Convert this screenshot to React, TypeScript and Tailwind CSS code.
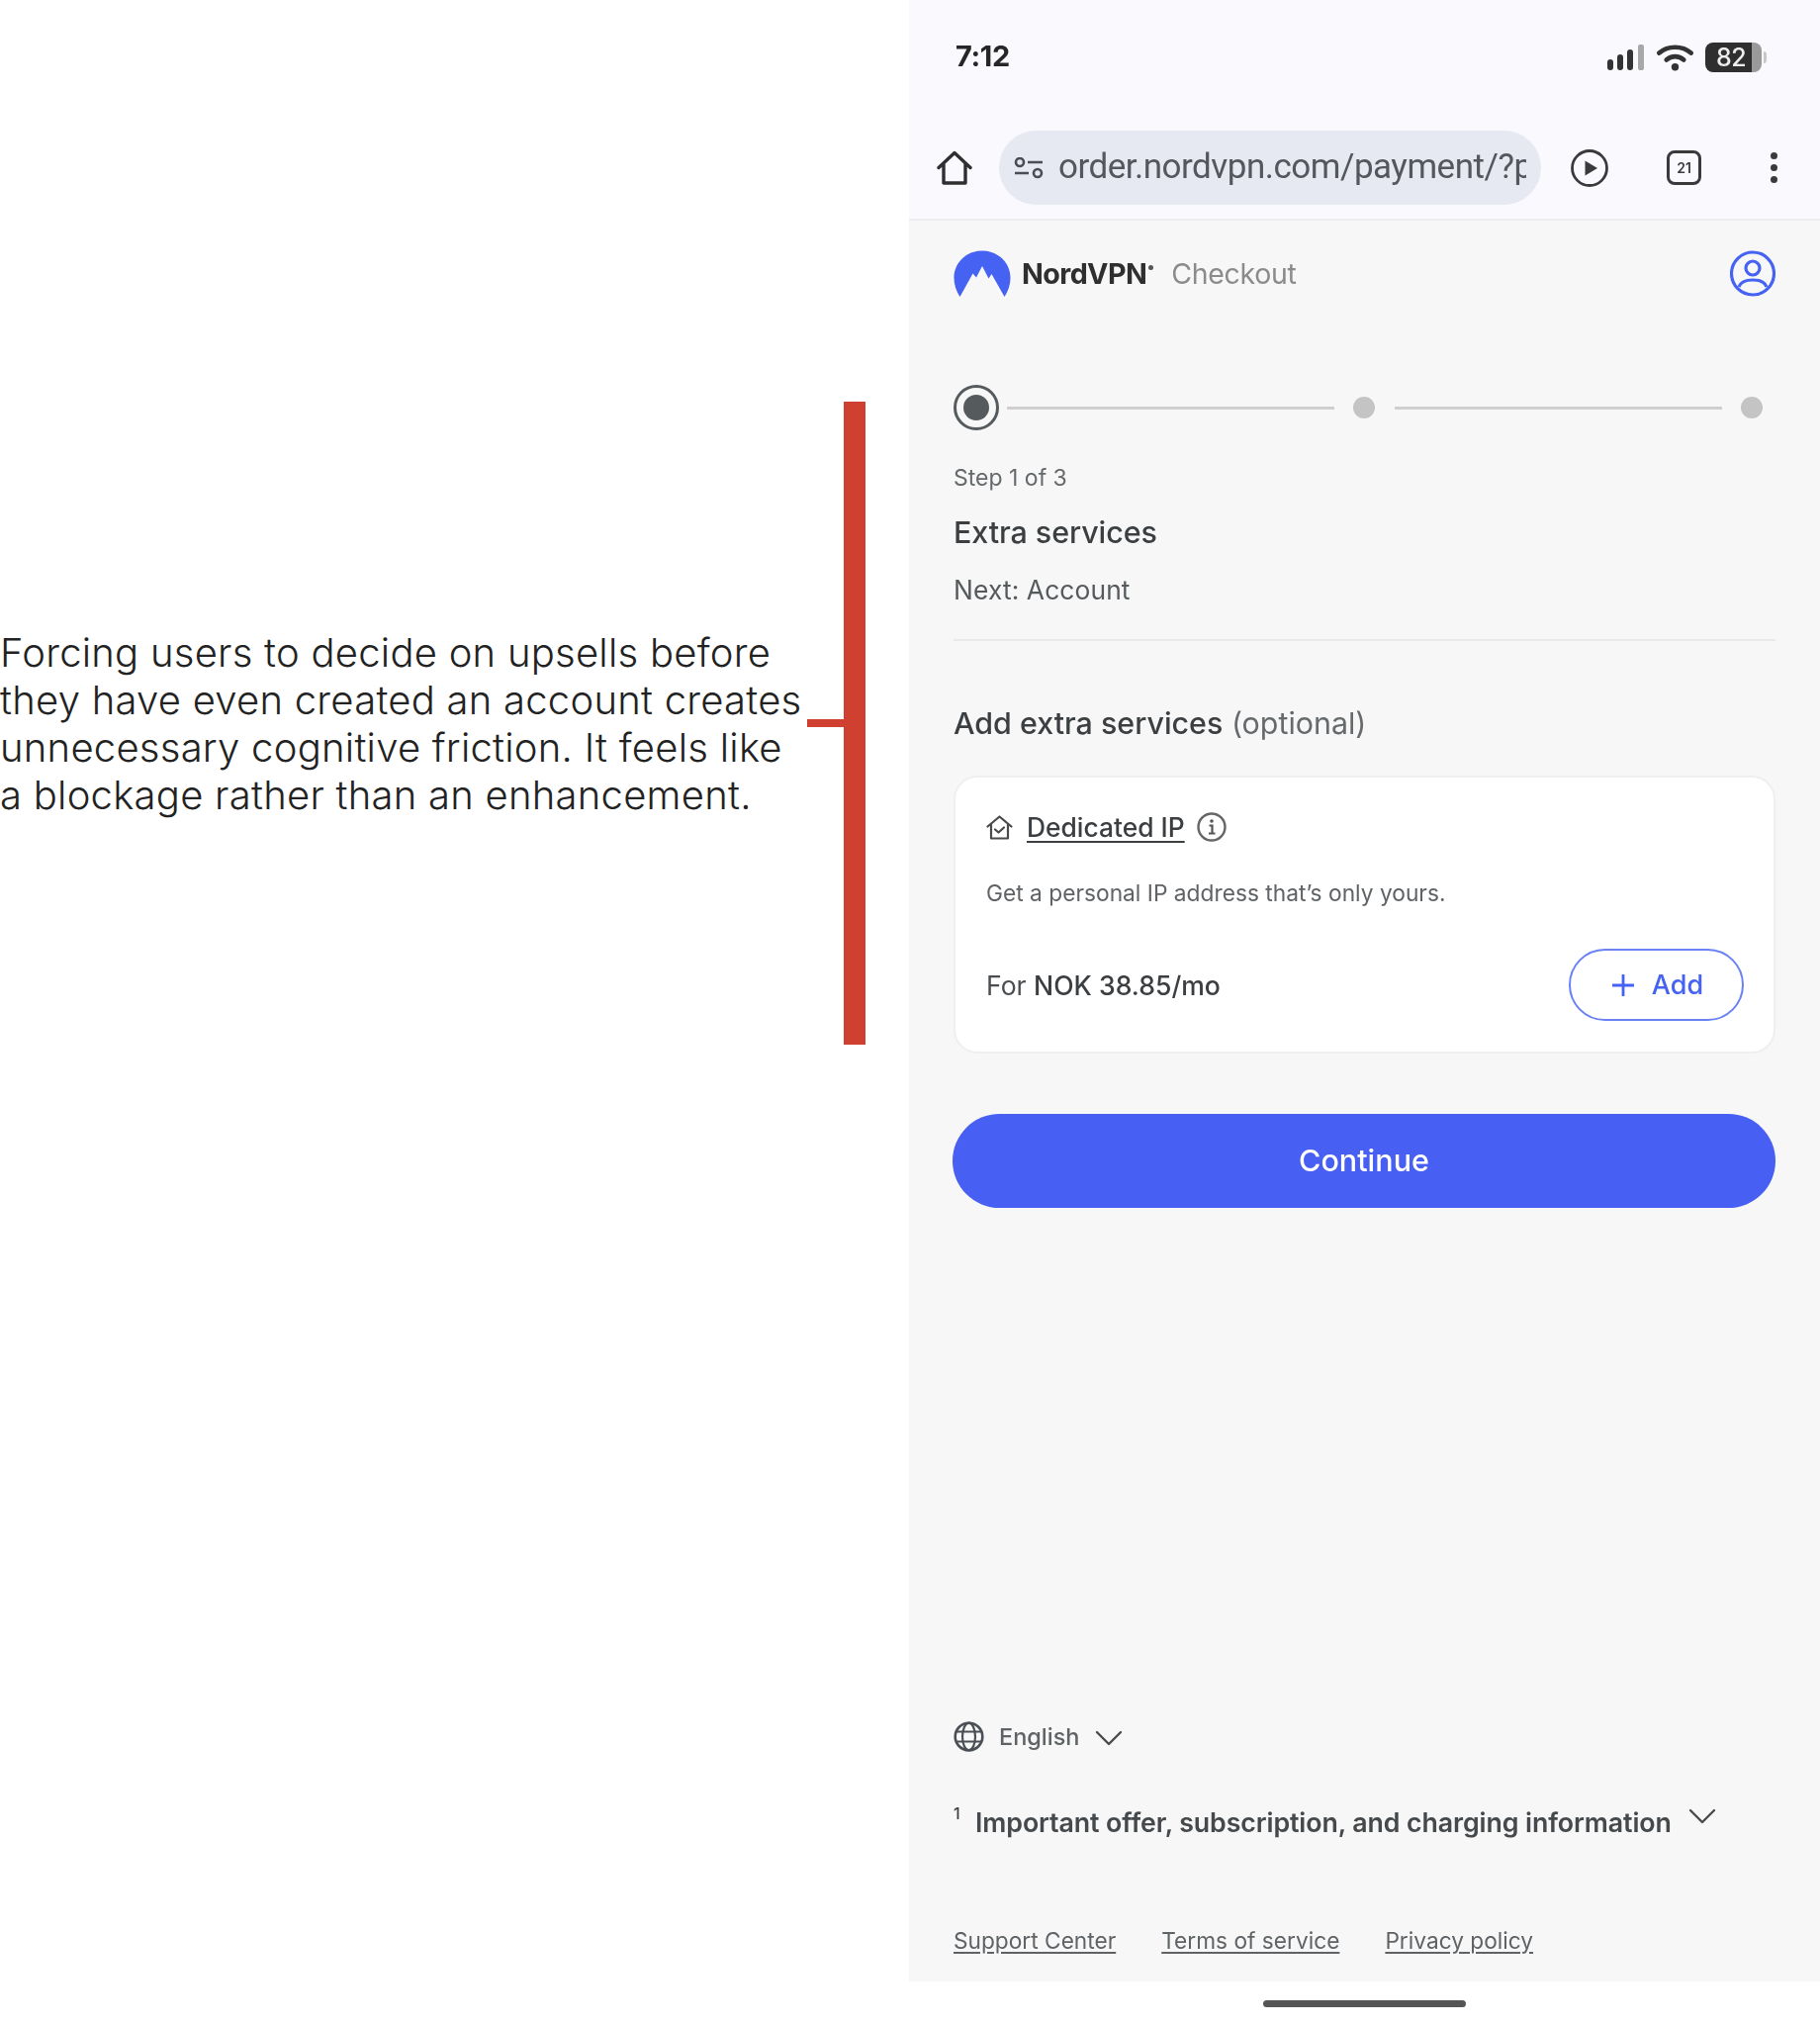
import React from "react";

function Logo() {
  return (
    <svg width="58" height="48" viewBox="0 0 58 48" className="shrink-0">
      <path d="M6.5 47C2.6 41 0.5 34.5 0.5 28C0.5 12.5 13 0.5 29 0.5C45 0.5 57.5 12.5 57.5 28C57.5 34.5 55.4 41 51.5 47L38.5 24L35.5 28.5L29 16L23 27.5L19.5 23.5Z" fill="#4562f2" />
    </svg>
  );
}

function Signal() {
  return (
    <svg width="38" height="28" viewBox="0 0 38 28" className="shrink-0">
      <rect x="0" y="16" width="6" height="11" rx="3" fill="#333" />
      <rect x="10" y="11" width="6" height="16" rx="3" fill="#333" />
      <rect x="20" y="6" width="6" height="21" rx="3" fill="#333" />
      <rect x="31" y="1" width="6" height="26" rx="2" fill="#a8a8a8" />
    </svg>
  );
}

function Wifi() {
  return (
    <svg width="37" height="28" viewBox="0 0 38 28" fill="none" className="shrink-0">
      <path d="M2.5 9.5C11.5 1.5 26.5 1.5 35.5 9.5" stroke="#333" strokeWidth="4.8" strokeLinecap="round" />
      <path d="M10 16.5C15 12 23 12 28 16.5" stroke="#333" strokeWidth="4.8" strokeLinecap="round" />
      <circle cx="19" cy="24" r="3.8" fill="#333" />
    </svg>
  );
}

function HomeIcon() {
  return (
    <svg width="36" height="36" viewBox="0 0 36 36" fill="none" className="shrink-0">
      <path d="M2 17.5L18 2.5L34 17.5M7 13.5V33H29V13.5" stroke="#2f2f2f" strokeWidth="3.4" strokeLinejoin="round" strokeLinecap="round" />
    </svg>
  );
}

function Tune() {
  return (
    <svg width="30" height="22" viewBox="0 0 30 22" fill="none" className="shrink-0">
      <circle cx="6" cy="5" r="4" stroke="#4a4d55" strokeWidth="2.6" />
      <path d="M14 5H29M1 16H15" stroke="#4a4d55" strokeWidth="2.6" />
      <circle cx="24" cy="16" r="4" stroke="#4a4d55" strokeWidth="2.6" />
    </svg>
  );
}

function Play() {
  return (
    <svg width="38" height="38" viewBox="0 0 38 38" fill="none" className="shrink-0">
      <circle cx="19" cy="19" r="17.5" stroke="#3a3a3a" strokeWidth="2.8" />
      <path d="M14.5 11.5L27 19L14.5 26.5Z" fill="#3a3a3a" />
    </svg>
  );
}

function UserIcon() {
  return (
    <svg width="46" height="47" viewBox="0 0 46 47" fill="none" className="-mt-[2px] shrink-0">
      <circle cx="23" cy="23.5" r="21.5" stroke="#4562f2" strokeWidth="3.2" />
      <circle cx="23" cy="18" r="7" stroke="#4562f2" strokeWidth="3.2" />
      <path d="M9 37C11 31.5 16 30 23 30C30 30 35 31.5 37 37" stroke="#4562f2" strokeWidth="3.2" />
    </svg>
  );
}

function HouseCheck() {
  return (
    <svg width="27" height="25" viewBox="0 0 27 25" fill="none" className="shrink-0">
      <path d="M1.5 11.5L13.5 1.5L25.5 11.5M5 9V23.5H22V9" stroke="#4a4a4a" strokeWidth="2.2" strokeLinejoin="round" strokeLinecap="round" />
      <path d="M9 14.5L12.5 17.5L18 12.5" stroke="#4a4a4a" strokeWidth="2.2" strokeLinecap="round" strokeLinejoin="round" />
    </svg>
  );
}

function InfoIcon() {
  return (
    <svg width="30" height="30" viewBox="0 0 30 30" fill="none" className="shrink-0">
      <circle cx="15" cy="15" r="13.5" stroke="#666" strokeWidth="2.4" />
      <circle cx="15" cy="9" r="1.8" fill="#555" />
      <path d="M12.5 13.5H15.5V21M12 21.5H18.5" stroke="#555" strokeWidth="2.2" />
    </svg>
  );
}

function Globe() {
  return (
    <svg width="31" height="31" viewBox="0 0 31 31" fill="none" className="shrink-0">
      <circle cx="15.5" cy="15.5" r="13.8" stroke="#4a4f55" strokeWidth="2.6" />
      <ellipse cx="15.5" cy="15.5" rx="6.5" ry="13.8" stroke="#4a4f55" strokeWidth="2.2" />
      <path d="M3 10.5H28M3 20.5H28" stroke="#4a4f55" strokeWidth="2.2" />
    </svg>
  );
}

function Chevron({ color = "#4a4a4a" }: { color?: string }) {
  return (
    <svg width="28" height="16" viewBox="0 0 28 16" fill="none" className="shrink-0">
      <path d="M2 2L14 14L26 2" stroke={color} strokeWidth="2.4" strokeLinecap="round" strokeLinejoin="round" />
    </svg>
  );
}

export default function App() {
  return (
    <div className="flex h-[2048px] w-[1840px] overflow-hidden bg-white font-[Inter,sans-serif]">
      <div className="flex h-[1056px] w-[919px] shrink-0 items-start pt-[406px]">
        <div className="mt-[2px] w-[816px] shrink-0 self-center whitespace-nowrap text-[40px] font-light leading-[48px] tracking-[0.25px] text-[#222222]">
          Forcing users to decide on upsells before
          <br />
          they have even created an account creates
          <br />
          unnecessary cognitive friction. It feels like
          <br />
          a blockage rather than an enhancement.
        </div>
        <div className="h-[8px] w-[37px] shrink-0 self-center bg-[#cf4030]" />
        <div className="h-full w-[22px] shrink-0 bg-[#cf4030]" />
      </div>

      <div className="flex h-full w-[921px] shrink-0 flex-col blur-[0.7px]">
        <div className="flex h-[223px] shrink-0 flex-col border-b-2 border-[#ececee] bg-[#faf9fe]">
          <div className="flex h-[132px] items-start justify-between pl-[47px] pr-[54px] pt-[39px]">
            <span className="text-[29px] font-bold leading-[36px] tracking-[-0.4px] text-[#262626]">7:12</span>
            <div className="mt-[4px] flex items-center gap-[12px]">
              <Signal />
              <Wifi />
              <div className="flex items-center">
                <div className="flex h-[30px] w-[57px] items-center rounded-[8px] bg-[linear-gradient(90deg,#2f2f2f_82%,#9a9a9a_82%)] pl-[11px] text-[25px] font-medium leading-none tracking-[-0.5px] text-[#eeeeee]">
                  82
                </div>
                <div className="ml-[2px] h-[12px] w-[3px] rounded-r-[3px] bg-[#c8c8c8]" />
              </div>
            </div>
          </div>
          <div className="flex items-center pl-[28px]">
            <HomeIcon />
            <div className="ml-[27px] flex h-[75px] w-[548px] shrink-0 items-center rounded-full bg-[#e6e9f2] pl-[15px] pr-[14px]">
              <Tune />
              <div className="ml-[15px] -mt-[1px] w-[473px] overflow-hidden whitespace-nowrap font-[Roboto,sans-serif] text-[35px] leading-[44px] tracking-[-0.5px] text-[#54575e]">
                order.nordvpn.com/payment/?plan
              </div>
            </div>
            <div className="ml-[30px]"><Play /></div>
            <div className="ml-[59px] flex h-[35px] w-[35px] shrink-0 items-center justify-center rounded-[8px] border-[3px] border-[#3a3a3a] text-[14px] font-semibold leading-none text-[#3a3a3a]">
              21
            </div>
            <div className="ml-[70px] flex flex-col gap-[5px]">
              <span className="h-[7px] w-[7px] rounded-full bg-[#3a3a3a]" />
              <span className="h-[7px] w-[7px] rounded-full bg-[#3a3a3a]" />
              <span className="h-[7px] w-[7px] rounded-full bg-[#3a3a3a]" />
            </div>
          </div>
        </div>

        <div className="flex flex-1 flex-col bg-[#f7f7f7] pl-[45px] pr-[45px]">
          <div className="mt-[30px] flex items-center justify-between">
            <div className="flex items-center">
              <Logo />
              <span className="ml-[11px] text-[28.7px] font-bold leading-[36px] tracking-[-0.6px] text-[#2f2f2f]">
                NordVPN
              </span>
              <span className="mb-[14px] ml-[2px] h-[5px] w-[5px] rounded-full bg-[#555]" />
              <span className="ml-[18px] text-[28.5px] leading-[36px] tracking-[-0.3px] text-[#8b8b8b]">Checkout</span>
            </div>
            <UserIcon />
          </div>

          <div className="mt-[88px] flex items-center">
            <div className="flex h-[46px] w-[46px] shrink-0 items-center justify-center rounded-full border-[3px] border-[#555a5c]">
              <div className="h-[26px] w-[26px] rounded-full bg-[#555a5c]" />
            </div>
            <div className="ml-[8px] h-[3px] w-[331px] bg-[#cfcfcf]" />
            <div className="ml-[19px] h-[22px] w-[22px] shrink-0 rounded-full bg-[#c4c4c4]" />
            <div className="ml-[20px] h-[3px] w-[331px] bg-[#cfcfcf]" />
            <div className="ml-[19px] h-[22px] w-[22px] shrink-0 rounded-full bg-[#c4c4c4]" />
          </div>

          <div className="mt-[33px] text-[23px] leading-[30px] text-[#666a6c]">Step 1 of 3</div>
          <div className="mt-[21px] text-[30.5px] font-medium leading-[38px] tracking-[-0.1px] text-[#3c3f41]">Extra services</div>
          <div className="mt-[22px] text-[26.4px] leading-[34px] tracking-[0.1px] text-[#555a5c]">Next: Account</div>
          <div className="mt-[33px] h-[2px] bg-[#e9e9e9]" />

          <div className="mt-[63px] text-[30.4px] leading-[40px] text-[#3c3f41]">
            <span className="font-medium">Add extra services</span>{" "}
            <span className="text-[#666a6c]">(optional)</span>
          </div>

          <div className="mt-[33px] flex h-[281px] flex-col rounded-[24px] border-2 border-[#efefef] bg-white pl-[31px] pr-[30px]">
            <div className="mt-[34px] flex h-[32px] items-center">
              <HouseCheck />
              <span className="ml-[14px] text-[26.4px] font-medium leading-[32px] text-[#3c3f41] underline decoration-2 underline-offset-[4px]">
                Dedicated IP
              </span>
              <span className="ml-[12px]"><InfoIcon /></span>
            </div>
            <div className="mt-[35px] text-[22.75px] leading-[32px] text-[#5f6366]">
              Get a personal IP address that’s only yours.
            </div>
            <div className="mt-[40px] flex items-center justify-between">
              <div className="text-[26.6px] leading-[34px] text-[#4a4e50]">
                For <span className="font-medium text-[#3c3f41]">NOK 38.85/mo</span>
              </div>
              <div className="flex h-[73px] w-[177px] items-center justify-center gap-[17px] rounded-full border-2 border-[#6a82f3] pl-[2px]">
                <svg width="24" height="24" viewBox="0 0 24 24" fill="none" className="shrink-0">
                  <path d="M12 1V23M1 12H23" stroke="#4562f2" strokeWidth="2.8" />
                </svg>
                <span className="text-[27px] font-medium leading-[32px] text-[#4562f2]">Add</span>
              </div>
            </div>
          </div>

          <div className="-ml-[1px] mt-[61px] flex h-[95px] items-center justify-center rounded-full bg-[#475ff2] text-[30.5px] font-medium text-white">
            <span className="-mt-[2px]">Continue</span>
          </div>

          <div className="mt-[519px] flex items-center">
            <Globe />
            <span className="ml-[15px] text-[23.5px] font-medium leading-[30px] text-[#5f6366]">English</span>
            <span className="ml-[15px] mt-[3px]"><Chevron /></span>
          </div>

          <div className="mt-[54px] flex items-start">
            <span className="mt-[-4px] w-[22px] text-[16px] font-medium leading-[24px] text-[#3c3f41]">1</span>
            <span className="text-[26.75px] font-semibold leading-[34px] tracking-[-0.1px] text-[#45494b]">
              Important offer, subscription, and charging information
            </span>
            <span className="ml-[17px] mt-[3px]"><Chevron /></span>
          </div>

          <div className="mt-[88px] flex gap-[46px] text-[22.7px] leading-[30px] text-[#5f6366] underline underline-offset-[3px]">
            <span>Support Center</span>
            <span>Terms of service</span>
            <span>Privacy policy</span>
          </div>
        </div>

        <div className="flex h-[45px] shrink-0 justify-center bg-white pt-[19px]">
          <div className="h-[7px] w-[205px] rounded-full bg-[#555555]" />
        </div>
      </div>
    </div>
  );
}
